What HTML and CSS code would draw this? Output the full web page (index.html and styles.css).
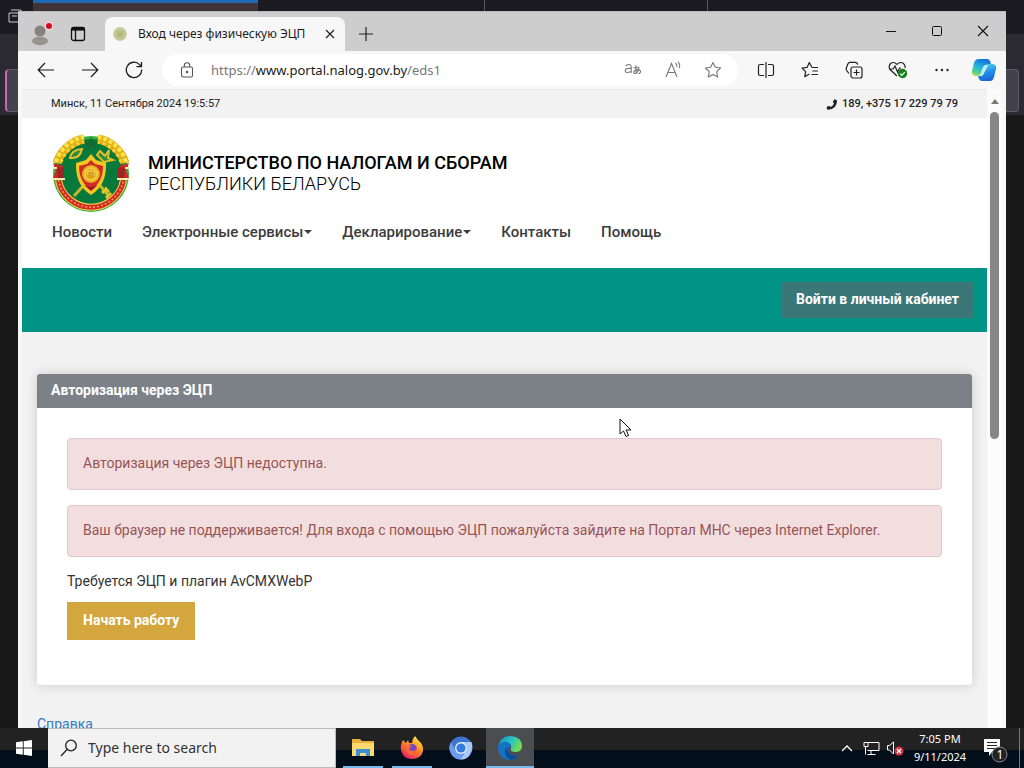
FILE: index.html
```html
<!DOCTYPE html>
<html lang="ru">
<head>
<meta charset="utf-8">
<meta name="viewport" content="width=device-width, initial-scale=1">
<title>Вход через физическую ЭЦП</title>
<link rel="stylesheet" href="styles.css">
</head>
<body>
<div class="desktop">
  <div class="backdrop" aria-hidden="true">
    <div class="back-tabs">
      <span class="back-active"></span><span class="back-tab"></span><span class="back-tab short"></span>
    </div>
    <svg class="back-icon" width="14" height="16" viewBox="0 0 14 16" fill="none" stroke="#c8c8cc"><path d="M3 2h10v3M1 5h10v9H1zM4 8h5"/></svg>
    <div class="back-bar"></div>
  </div>

  <div class="window">
    <div class="titlebar">
      <button class="profile" aria-label="Profile">
        <svg width="24" height="26" viewBox="0 0 24 26"><circle cx="11" cy="11" r="5.5" fill="#858380"/><ellipse cx="11" cy="21" rx="8" ry="4.2" fill="#96948f"/><circle cx="20" cy="6" r="4.500" fill="#f0d5d5"/><circle cx="20" cy="6" r="3" fill="#d00d20"/></svg>
      </button>
      <button class="tab-menu" aria-label="Tab actions">
        <svg width="16" height="16" viewBox="0 0 16 16" fill="none" stroke="#111" stroke-width="1.3"><rect x="1.500" y="1.500" width="13" height="13" rx="2"/><path d="M1.500 3h13" stroke-width="3.200"/><path d="M5.500 4v10"/></svg>
      </button>
      <div class="tab">
        <span class="favicon"></span>
        <span class="tab-title">Вход через физическую ЭЦП</span>
        <button class="tab-close" aria-label="Close tab"><svg width="10" height="10" viewBox="0 0 10 10" stroke="#222" stroke-width="1.2"><path d="M1 1l8 8M9 1l-8 8"/></svg></button>
      </div>
      <button class="new-tab" aria-label="New tab"><svg width="14" height="14" viewBox="0 0 14 14" stroke="#222" stroke-width="1.2"><path d="M7 0v14M0 7h14"/></svg></button>
      <div class="controls">
        <button aria-label="Minimize"><svg width="12" height="12" viewBox="0 0 12 12" stroke="#111"><path d="M1 6.500h10"/></svg></button>
        <button aria-label="Maximize"><svg width="12" height="12" viewBox="0 0 12 12" fill="none" stroke="#111"><rect x="1.500" y="1.500" width="9" height="9" rx="1"/></svg></button>
        <button aria-label="Close"><svg width="12" height="12" viewBox="0 0 12 12" stroke="#111" stroke-width="1.100"><path d="M1 1l10 10M11 1L1 11"/></svg></button>
      </div>
    </div>

    <div class="toolbar">
      <button class="tool" aria-label="Back"><svg width="18" height="16" viewBox="0 0 18 16" fill="none" stroke="#1b1b1b" stroke-width="1.2"><path d="M17 8H1.500M8 1L1.200 8 8 15"/></svg></button>
      <button class="tool" aria-label="Forward"><svg width="18" height="16" viewBox="0 0 18 16" fill="none" stroke="#1b1b1b" stroke-width="1.2"><path d="M1 8h15.500M10 1l6.800 7-6.800 7"/></svg></button>
      <button class="tool" aria-label="Refresh"><svg width="18" height="18" viewBox="0 0 18 18" fill="none" stroke="#1b1b1b" stroke-width="1.3"><path d="M16.700 8.500A7.700 7.700 0 1 1 14.600 3.600L16.400 5.500M16.500 1v4.700H11.500"/></svg></button>
      <div class="address">
        <svg class="lock" width="14" height="16" viewBox="0 0 14 16" fill="none" stroke="#555" stroke-width="1.1"><rect x="1.500" y="5" width="11" height="10" rx="1.500"/><path d="M4.300 5V3.500a2.700 2.700 0 0 1 5.400 0V5"/><circle cx="7" cy="10" r=".7" fill="#555"/></svg>
        <a class="url" href="https://www.portal.nalog.gov.by/eds1">https://<b>www.portal.nalog.gov.by</b>/eds1</a>
        <button aria-label="Translate"><svg width="18" height="14" viewBox="0 0 18 14" fill="none" stroke="#777" stroke-width="1.1"><path d="M1.500 2.800Q6.500 -.2 7.200 3.500V10M7.200 5.500Q1 5 1.200 7.800 1.800 10.800 7 8.500M9.500 4.500q3 .5 6-.2M12 2.200q-.5 4.800.4 8.600M15 5.200q-1 4.800-4.300 5.300-2-.7-.2-2.700 2.200-1.500 4.500-1 2.500 1.200 1 3.200l-1.800.8"/></svg></button>
        <button aria-label="Read aloud"><svg width="18" height="18" viewBox="0 0 18 18" fill="none" stroke="#777" stroke-width="1.1"><path d="M2 16L7.500 2.500 13 16M4 11.500h7M11.500 2q1.800 1.500 1.200 4M14 .8q2.500 2.500 1.300 6.200"/></svg></button>
        <button aria-label="Favorite"><svg width="18" height="18" viewBox="0 0 18 18" fill="none" stroke="#777" stroke-width="1.1" stroke-linejoin="round"><path d="M9 1.400l2.300 4.900 5.300.7-3.900 3.700 1 5.400L9 13.400l-4.700 2.700 1-5.400L1.400 7l5.300-.7z"/></svg></button>
      </div>
      <button class="tool" aria-label="Split screen"><svg width="18" height="18" viewBox="0 0 18 18" fill="none" stroke="#222" stroke-width="1.2"><path d="M7 3.500H3Q1.500 3.500 1.500 5v8Q1.500 14.500 3 14.500h4M11 3.500h4q1.500 0 1.500 1.500v8q0 1.500-1.500 1.500h-4M9 1v16"/></svg></button>
      <button class="tool" aria-label="Favorites"><svg width="18" height="18" viewBox="0 0 18 18" fill="none" stroke="#222" stroke-width="1.200" stroke-linejoin="round"><path d="M11 6.500L8.300 1.500 6.100 6.400 1 7l3.700 3.600-1 5.100 4.600-2.600M11 6.500h6M11.500 10H17M10.500 13.500H17"/></svg></button>
      <button class="tool" aria-label="Collections"><svg width="18" height="18" viewBox="0 0 18 18" fill="none" stroke="#222" stroke-width="1.200"><rect x="6" y="6" width="11" height="11" rx="2"/><path d="M11.500 8.500v6M8.500 11.500h6M4 12.500L1.900 9.800Q.8 8.500 1.300 7L2.800 3q.5-1.500 2-1.700h5.700q1.700.2 2.200 2.200"/></svg></button>
      <button class="tool" aria-label="Browser essentials"><svg width="20" height="18" viewBox="0 0 20 18" fill="none" stroke="#222" stroke-width="1.200"><path d="M9 15L2 8.500Q0 5 2.800 2.300 6 .3 9 3.300q3-3 6.200-1Q17.700 4.500 17 7M1 8h4l2-3 2.500 6L11.500 7H13"/><circle cx="14.500" cy="12.500" r="4.700" fill="#16801d" stroke="none"/><path d="M12.200 12.600l1.600 1.700 3-3.200" stroke="#fff"/></svg></button>
      <button class="tool" aria-label="Settings and more"><svg width="16" height="4" viewBox="0 0 16 4" fill="#222"><circle cx="2.500" cy="2" r="1.200"/><circle cx="8" cy="2" r="1.200"/><circle cx="13.500" cy="2" r="1.200"/></svg></button>
      <button class="copilot" aria-label="Copilot"><svg width="26" height="24" viewBox="0 0 26 24"><defs><linearGradient id="cp1" x1=".6" y1="0" x2=".2" y2="1"><stop stop-color="#146fdc"/><stop offset=".5" stop-color="#25b9dc"/><stop offset=".8" stop-color="#4fd18f"/><stop offset="1" stop-color="#c5dc55"/></linearGradient><linearGradient id="cp2" x1=".3" x2=".5" y2="1"><stop stop-color="#55d0ef"/><stop offset=".5" stop-color="#1e8fe6"/><stop offset="1" stop-color="#1b62dc"/></linearGradient></defs><path d="M8 1h8q3 0 4 5l-5 1q-2 0-3 3l-2 5q-1 3-4 3H4q-4-1-3-5l2-8q1-4 5-4z" fill="url(#cp1)"/><path d="M18 6h4q4 1 3 5l-2 8q-1 4-4 4h-8q-3 0-4-5h3q2 0 3-3l3-6q1-3 2-3z" fill="url(#cp2)"/><path d="M12 9q1-2 3-2h1l-3 8q-1 3-4 3H8q1-1 2-3z" fill="#bdeef0"/></svg></button>
    </div>

    <div class="viewport">
      <div class="page">
        <div class="infobar">
          <span>Минск, 11 Сентября 2024 19:5:57</span>
          <span class="phone"><svg width="11" height="11" viewBox="0 0 16 16" fill="#222"><path d="M12 .5l3.300.8q.7.200.7.900 0 13-13.400 13.400-.8 0-1-.8L.8 11.600l4-1.800 1.600 2Q10 10 11.800 6.400l-2-1.600z"/></svg>189, +375 17 229 79 79</span>
        </div>
        <header class="site-header">
          <div class="brand">
            <svg class="emblem" width="80" height="80" viewBox="0 0 80 80">
              <circle cx="39" cy="41" r="38" fill="#35ad3c"/>
              <circle cx="39" cy="40" r="34" fill="#08783b"/>
              <path d="M5 30A35 35 0 0 1 32 6M73 30A35 35 0 0 0 46 6" fill="none" stroke="#e3ad17" stroke-width="9"/>
              <path d="M4 29A36 36 0 0 1 32 4M74 29A36 36 0 0 0 46 4" fill="none" stroke="#fbe548" stroke-width="4" stroke-dasharray="4 2"/>
              <path d="M9 29A31 31 0 0 1 32 9M69 29A31 31 0 0 0 46 9" fill="none" stroke="#f8d638" stroke-width="3" stroke-dasharray="3 3"/>
              <path d="M6.500 47A33 33 0 0 0 71.500 47" fill="none" stroke="#f3d648" stroke-width="7"/>
              <path d="M6.500 47A33 33 0 0 0 71.500 47" fill="none" stroke="#d4292a" stroke-width="5"/>
              <path d="M6.500 47A33 33 0 0 0 71.500 47" fill="none" stroke="#f1a33a" stroke-width="1.500" stroke-dasharray="2 2"/>
              <path d="M1 30l10 3v12H1l3-7zM77 30l-10 3v12h10l-3-7z" fill="#c92a26"/>
              <path d="M5 34l7 1v10H6zM73 34l-7 1v10h6z" fill="#9e2421"/>
              <path d="M0 46h13M65 46h13M1 35h4M73 35h4" stroke="#f7edb0" stroke-width="2"/>
              <path d="M39 4l2 5h5l-4 3 2 5-5-3-5 3 2-5-4-3h5z" fill="#146b30"/>
              <path d="M22 63L53 29M56 62L29 30" stroke="#c5b72c" stroke-width="3"/>
              <path d="M18 25q1-8 12-9-2 10-12 9zM48 18l5 5 4-6-1 8 5 2-9 2-7-7z" fill="#2e8b3b" stroke="#e2bf27" stroke-width="2"/>
              <path d="M53 55l4 4M50 60l5-5M59 60l-5 5" stroke="#e6c42b" stroke-width="3"/>
              <path d="M39 21l5 6 10 3q1 22-15 32-16-10-15-32l10-3z" fill="#f4c622"/>
              <path d="M39 27l4 4 8 2q0 16-12 24-12-8-12-24l8-2z" fill="#cf2a27"/>
              <circle cx="39" cy="41" r="9" fill="#e7ad20"/><circle cx="39" cy="41" r="6" fill="#dfa020" stroke="#f3cc3d" stroke-width="2"/>
              <path d="M36 42q-2-3 0-4h6q2 2 0 5" fill="none" stroke="#f7d965"/>
              <path d="M32 52q7 4 14 0l-7 6z" fill="#9f1724"/>
            </svg>
            <div class="brand-name"><strong>МИНИСТЕРСТВО ПО НАЛОГАМ И СБОРАМ</strong><span>РЕСПУБЛИКИ БЕЛАРУСЬ</span></div>
          </div>
          <nav class="menu">
            <a href="#news">Новости</a>
            <a href="#services">Электронные сервисы<i class="caret"></i></a>
            <a href="#declarations">Декларирование<i class="caret"></i></a>
            <a href="#contacts">Контакты</a>
            <a href="#help">Помощь</a>
          </nav>
        </header>
        <div class="account-band"><button class="login">Войти в личный кабинет</button></div>
        <main class="content">
          <section class="panel">
            <h1>Авторизация через ЭЦП</h1>
            <div class="panel-body">
              <p class="alert">Авторизация через ЭЦП недоступна.</p>
              <p class="alert">Ваш браузер не поддерживается! Для входа с помощью ЭЦП пожалуйста зайдите на Портал МНС через Internet Explorer.</p>
              <p class="note">Требуется ЭЦП и плагин AvCMXWebP</p>
              <button class="start-work">Начать работу</button>
            </div>
          </section>
          <a class="help" href="#reference">Справка</a>
        </main>
      </div>
      <div class="scrollbar" aria-hidden="true"><span class="arrow"></span><span class="thumb"></span></div>
    </div>
  </div>

  <div class="taskbar">
    <button class="start" aria-label="Start"><svg width="16" height="16" viewBox="0 0 16 16" fill="#fff"><path d="M0 2.300L6.800 1.300v6.200H0zM7.700 1.200L16 0v7.500H7.700zM0 8.500h6.800v6.200L0 13.700zM7.700 8.500H16V16l-8.300-1.200z"/></svg></button>
    <label class="search">
      <svg width="18" height="18" viewBox="0 0 18 18" fill="none" stroke="#222" stroke-width="1.3"><circle cx="11" cy="6.500" r="5.300"/><path d="M7 10.500L1 17"/></svg>
      <input type="text" placeholder="Type here to search" aria-label="Search">
    </label>
    <div class="apps">
      <button class="app open" aria-label="File Explorer"><svg width="22" height="20" viewBox="0 0 22 20"><path d="M0 1h8l2 2h12v15H0z" fill="#e8b23d"/><path d="M0 5h22v13H0z" fill="#fbd96d"/><path d="M4 18v-7h14v7h-4v-3H8v3z" fill="#3f8ed4"/><path d="M8 15h6v3H8z" fill="#f7d980"/></svg></button>
      <button class="app open" aria-label="Firefox"><svg width="24" height="24" viewBox="0 0 24 24"><defs><linearGradient id="ff" x1=".8" x2=".2" y2="1"><stop stop-color="#fff04d"/><stop offset=".45" stop-color="#ff8a20"/><stop offset="1" stop-color="#e9146e"/></linearGradient></defs><path d="M2 6l1-2 3 3 2-3 1 3 3 0Q12 3 15 0l3 4q6 5 5 11-2 8-11 8T1 14Q0 10 2 6z" fill="url(#ff)"/><circle cx="12" cy="13" r="5" fill="#7847c7"/><path d="M6 11q3-3 6-1l-3 2q0 3 4 3 3 0 4-4 1 8-6 8-5-1-5-8z" fill="#ff6b32"/></svg></button>
      <button class="app" aria-label="Chromium"><svg width="24" height="24" viewBox="0 0 24 24"><circle cx="12" cy="12" r="11.500" fill="#3f73d0"/><path d="M12 6h10.500Q25 13 20 20q-4 4-9 3.500L17 15z" fill="#aac7f5"/><path d="M2 6l5 9q3 4 8 2l-4 6.500Q3 23 .5 14 0 9 2 6z" fill="#6b9aef"/><circle cx="12" cy="12" r="6" fill="#e1edff"/><circle cx="12" cy="12" r="4.600" fill="#347be0"/></svg></button>
      <button class="app open active" aria-label="Microsoft Edge"><svg width="26" height="24" viewBox="0 0 26 24"><defs><linearGradient id="ed" y2=".4"><stop stop-color="#168bd4"/><stop offset=".6" stop-color="#2bc5c0"/><stop offset="1" stop-color="#72db55"/></linearGradient></defs><path d="M1 11Q3 0 14 0q11 1 11 10 0 6-7 6-5 0-4-4 1-4-3-5-6-1-10 4z" fill="url(#ed)"/><path d="M1 10q3-5 9-4 4 1 4 4-5 3-1 8 4 4 9 1-3 5-10 5Q1 23 1 10z" fill="#1474c4"/><path d="M11 10q-5 4-2 10 2 3 5 4 5-1 8-5-5 2-9-1t-2-8z" fill="#0b4e98"/></svg></button>
    </div>
    <div class="tray">
      <button aria-label="Show hidden icons"><svg width="12" height="8" viewBox="0 0 12 8" fill="none" stroke="#fff" stroke-width="1.3"><path d="M1 7l5-5 5 5"/></svg></button>
      <button aria-label="Network"><svg width="17" height="15" viewBox="0 0 17 15" fill="none" stroke="#fff"><path d="M5 1.500h11v8H4.500M1 1.500h4v4H1zM2.500 5.500v8M8 9.500v4M4.500 13.500h8"/></svg></button>
      <button aria-label="Volume"><svg width="18" height="16" viewBox="0 0 18 16"><path d="M1.500 5.500h2l4-3.500v12l-4-4h-2z" fill="none" stroke="#fff"/><circle cx="13" cy="11" r="4.500" fill="#d53545"/><path d="M11 9l4 4M15 9l-4 4" stroke="#fff" stroke-width="1.300"/></svg></button>
      <time class="clock"><span>7:05 PM</span><span>9/11/2024</span></time>
      <button class="notify" aria-label="Notifications"><svg width="24" height="26" viewBox="0 0 24 26"><path d="M0 2h16v13h-8l-3 4v-4H0z" fill="#fff"/><path d="M3 5.500h10M3 8.500h10M3 11.500h10" stroke="#222"/><circle cx="15.500" cy="17.500" r="7.500" fill="#20242a" stroke="#888"/></svg><span class="badge">1</span></button>
      <span class="peek"></span>
    </div>
  </div>

  <svg class="cursor" aria-hidden="true" width="13" height="20" viewBox="0 0 13 20"><path d="M1 1v15l3.500-3 2.500 5.500 2.500-1L7.200 12H12z" fill="#fff" stroke="#111"/></svg>
</div>
</body>
</html>
```

FILE: styles.css
```css
* { box-sizing: border-box; }
body { margin: 0; font-family: Roboto, "Liberation Sans", sans-serif; font-size: 14px; line-height: 20px; color: #333; }
button { border: 0; padding: 0; background: none; font: inherit; color: inherit; display: flex; align-items: center; justify-content: center; }
svg { display: block; flex: none; }
p, h1 { margin: 0; }

.desktop { position: relative; height: 100vh; display: flex; flex-direction: column; background: #181818; overflow: hidden; }

.backdrop { position: absolute; inset: 0 0 auto; height: 115px; background: linear-gradient(#1c1b22 34px, #2b2a33 34px); }
.back-tabs { display: flex; height: 11px; padding-left: 33px; }
.back-active { width: 225px; background: #403338; border-top: 3px solid #1d69b4; }
.back-tab { width: 227px; border-right: 1px solid #55555c; }
.back-tab.short { width: 223px; }
.back-icon { position: absolute; left: 8px; top: 8px; }
.back-bar { position: absolute; left: 5px; right: 5px; top: 69px; height: 43px; background: #42414d; border: 1px solid #5b5a66; border-left: 2px solid #c46aa8; border-radius: 4px; }

.window { position: relative; flex: 1; min-height: 0; margin: 11px 18px 0; display: flex; flex-direction: column; background: #f7f7f7; }
.titlebar { flex: none; height: 40px; display: flex; align-items: flex-end; background: #cdcdcd; border-top: 1px solid #b9b9b9; font-family: "Noto Sans", sans-serif; }
.profile { width: 46px; height: 36px; }
.tab-menu { width: 28px; height: 34px; }
.tab { width: 240px; height: 34px; margin-left: 13px; padding: 0 10px 0 8px; display: flex; align-items: center; background: #f7f7f7; border-radius: 8px 8px 0 0; }
.favicon { width: 14px; height: 14px; border-radius: 50%; background: radial-gradient(#a9b274, #dce1b8); }
.tab-title { flex: 1; margin-left: 11px; font-size: 12px; color: #1b1b1b; white-space: nowrap; }
.new-tab { width: 42px; height: 34px; }
.controls { display: flex; align-self: flex-start; margin-left: auto; }
.controls button { width: 46px; height: 38px; }

.toolbar { flex: none; height: 38px; display: flex; align-items: center; padding: 0 2px 0 6px; }
.tool { width: 44px; height: 36px; }
.copilot { width: 40px; height: 36px; }
.address { flex: 1; min-width: 0; height: 32px; margin: 0 6px; padding-left: 18px; display: flex; align-items: center; background: #fff; border-radius: 16px; font-family: "Noto Sans", sans-serif; }
.address button { width: 40px; height: 32px; }
.address button:last-child { margin-right: 5px; }
.url { flex: 1; margin-left: 17px; font-size: 13px; color: #777; text-decoration: none; white-space: nowrap; }
.url b { font-weight: 400; color: #1b1b1b; }

.viewport { flex: 1; min-height: 0; display: flex; padding: 0 4px; }
.page { flex: 1; min-width: 0; overflow: hidden; background: #f2f2f2; }
.scrollbar { width: 15px; display: flex; flex-direction: column; align-items: center; gap: 8px; padding-top: 10px; background: #fbfbfb; }
.arrow { border: 4px solid transparent; border-top: 0; border-bottom: 5px solid #777; }
.thumb { width: 9px; height: 52%; border-radius: 5px; background: #868686; }

.infobar { display: flex; align-items: center; justify-content: space-between; height: 29px; padding: 0 29px; border-top: 1px solid #e8e8e8; font-size: 11px; color: #222; }
.phone { display: flex; align-items: center; gap: 5px; font-weight: 500; }
.site-header { height: 150px; padding: 15px 30px 0; background: #fff; }
.brand { display: flex; align-items: center; gap: 16px; }
.brand-name { display: flex; flex-direction: column; font-size: 18px; line-height: 21px; color: #000; }
.brand-name strong { font-weight: 500; }
.brand-name span { font-weight: 300; }
.menu { display: flex; gap: 30px; margin-top: 9px; }
.menu a { display: flex; align-items: center; font-size: 15px; font-weight: 500; color: #3c3c3c; text-decoration: none; white-space: nowrap; }
.caret { margin-left: 1px; border: 4px solid transparent; border-top-color: #3c3c3c; border-bottom: 0; }
.account-band { display: flex; align-items: center; justify-content: flex-end; height: 64px; padding: 0 14px; background: #019386; }
.login { height: 36px; padding: 0 14px 2px; background: #3c7777; color: #fff; font-weight: 700; }

.content { padding: 42px 15px 0; }
.panel { background: #fff; border-radius: 3px; box-shadow: 0 0 12px rgba(0, 0, 0, .17); }
.panel h1 { padding: 6px 14px 8px; border-radius: 3px 3px 0 0; background: #7c8188; color: #fff; font-size: 14px; line-height: 20px; font-weight: 700; }
.panel-body { padding: 30px 30px 45px; }
.alert { margin-bottom: 15px; padding: 14px 15px 16px; border: 1px solid #dfc9ca; border-radius: 4px; background: #f2dede; color: #985455; }
.note { margin: -1px 0 11px; }
.start-work { height: 38px; padding: 0 16px 2px; background: #d3a63e; color: #fff; font-weight: 700; }
.help { display: inline-block; margin-top: 29px; color: #337ac0; text-decoration: none; }

.taskbar { position: relative; flex: none; height: 40px; display: flex; background: linear-gradient(#222 22px, #020e1a 22px); font-family: "Noto Sans", sans-serif; color: #fff; }
.start { width: 48px; }
.search { width: 288px; display: flex; align-items: center; gap: 10px; padding-left: 12px; background: #f2f2f2; border: 1px solid #bbb; border-left: 0; }
.search input { flex: 1; min-width: 0; border: 0; padding: 0; background: none; font: 14px/20px "Noto Sans", sans-serif; outline: 0; }
.search input::placeholder { color: #333; opacity: 1; }
.apps { display: flex; gap: 1px; margin-left: 3px; }
.app { position: relative; width: 48px; }
.open::after { content: ""; position: absolute; left: 4px; right: 4px; bottom: 0; height: 2px; background: #76b9ed; }
.active { background: #4b4d50; }
.active::after { left: 0; right: 0; }
.tray { display: flex; align-items: center; margin-left: auto; }
.tray button { width: 24px; height: 40px; }
.clock { width: 66px; display: flex; flex-direction: column; align-items: center; font-size: 11px; line-height: 18px; }
.tray .notify { position: relative; width: 46px; padding-top: 4px; }
.badge { position: absolute; left: 21px; top: 18px; width: 12px; font-size: 12px; line-height: 18px; text-align: center; }
.peek { width: 5px; height: 40px; border-left: 1px solid #777; }

.cursor { position: absolute; left: 619px; top: 418px; }
```
